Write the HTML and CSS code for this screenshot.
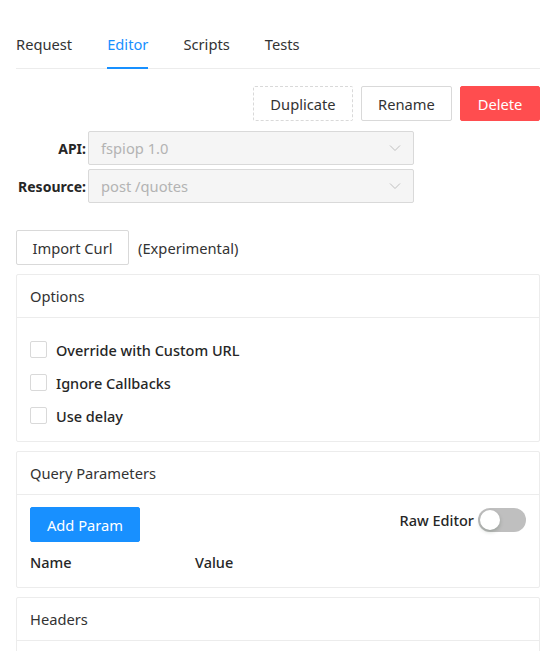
FILE: index.html
```html
<!DOCTYPE html>
<html>
<head>
<meta charset="utf-8">
<link rel="stylesheet" href="styles.css">
</head>
<body>
<div class="page">
  <nav class="tabs">
    <div class="tab">Request</div>
    <div class="tab active">Editor</div>
    <div class="tab">Scripts</div>
    <div class="tab">Tests</div>
  </nav>

  <div class="actions">
    <button class="btn dashed">Duplicate</button>
    <button class="btn">Rename</button>
    <button class="btn danger">Delete</button>
  </div>

  <div class="form">
    <label class="lbl">API:</label>
    <div class="select"><span>fspiop 1.0</span><svg class="arrow" viewBox="0 0 12 8"><path d="M1 1.5 L6 6.5 L11 1.5" fill="none" stroke="#bfbfbf" stroke-width="1"/></svg></div>
    <label class="lbl">Resource:</label>
    <div class="select"><span>post /quotes</span><svg class="arrow" viewBox="0 0 12 8"><path d="M1 1.5 L6 6.5 L11 1.5" fill="none" stroke="#bfbfbf" stroke-width="1"/></svg></div>
  </div>

  <div class="curl">
    <button class="btn">Import Curl</button>
    <span>(Experimental)</span>
  </div>

  <section class="card">
    <div class="card-head">Options</div>
    <div class="card-body options">
      <label class="check"><span class="box"></span>Override with Custom URL</label>
      <label class="check"><span class="box"></span>Ignore Callbacks</label>
      <label class="check"><span class="box"></span>Use delay</label>
    </div>
  </section>

  <section class="card">
    <div class="card-head">Query Parameters</div>
    <div class="card-body params">
      <div class="params-top">
        <button class="btn primary">Add Param</button>
        <div class="raw">Raw Editor <span class="switch"><span class="knob"></span></span></div>
      </div>
      <div class="cols">
        <div class="col-name">Name</div>
        <div class="col-value">Value</div>
      </div>
    </div>
  </section>

  <section class="card">
    <div class="card-head">Headers</div>
    <div class="card-body"></div>
  </section>
</div>
</body>
</html>
```

FILE: styles.css
```css
* { box-sizing: border-box; }
html, body { margin: 0; padding: 0; background: #fff; }
body {
  font-family: "Noto Sans", "Open Sans", sans-serif;
  font-size: 14px;
  color: #333;
}
.page {
  padding: 21px 9px 0 16px;
}
.tabs {
  display: flex;
  gap: 35px;
  border-bottom: 1px solid #ececec;
  height: 48px;
}
.tab {
  padding: 12px 0 0;
  line-height: 22px;
  font-size: 14.7px;
  color: #333;
  height: 48px;
  white-space: nowrap;
}
.tab.active {
  color: #1890ff;
  border-bottom: 2px solid #1890ff;
  margin-bottom: -1px;
  height: 48px;
}
.actions {
  display: flex;
  justify-content: flex-end;
  gap: 8px;
  margin-top: 17px;
}
.btn {
  font-family: inherit;
  font-size: 14.7px;
  color: #333;
  background: #fff;
  border: 1px solid #d9d9d9;
  border-radius: 2px;
  height: 35px;
  padding: 0 10px;
  cursor: pointer;
  white-space: nowrap;
}
.btn.dashed { border-style: dashed; width: 100px; }
.actions .btn:nth-child(2) { width: 91px; }
.btn.danger { background: #ff4d4f; border-color: #ff4d4f; color: #fff; width: 80px; }
.btn.primary { background: #1890ff; border-color: #1890ff; color: #fff; }

.form {
  display: grid;
  grid-template-columns: 70px 326px;
  column-gap: 2px;
  row-gap: 4px;
  margin-top: 10px;
  align-items: center;
}
.lbl {
  text-align: right;
  font-weight: 700;
  font-size: 14px;
  color: #262626;
  white-space: nowrap;
}
.select {
  height: 34px;
  background: #f5f5f5;
  border: 1px solid #d9d9d9;
  border-radius: 2px;
  display: flex;
  align-items: center;
  justify-content: space-between;
  padding: 0 12px;
  color: #b3b3b3;
  font-size: 14.7px;
}
.arrow { width: 12px; height: 8px; }

.curl {
  display: flex;
  align-items: center;
  gap: 9px;
  margin-top: 27px;
  font-size: 14.7px;
}
.curl .btn { width: 113px; }

.card {
  border: 1px solid #ececec;
  border-radius: 2px;
  margin-top: 9px;
}
.card-head {
  height: 43px;
  border-bottom: 1px solid #ececec;
  padding: 0 13px;
  display: flex;
  align-items: center;
  font-size: 14.7px;
  color: #333;
}
.options {
  padding: 15px 13px 9px;
  display: flex;
  flex-direction: column;
}
.check {
  display: flex;
  align-items: center;
  gap: 9px;
  height: 33px;
  font-weight: 500;
  font-size: 14.5px;
  color: #262626;
  white-space: nowrap;
}
.box {
  width: 17px;
  height: 17px;
  border: 1px solid #d9d9d9;
  border-radius: 2px;
  background: #fff;
  flex: none;
}
.params {
  padding: 12px 13px 13px;
}
.params-top {
  display: flex;
  justify-content: space-between;
  align-items: flex-start;
}
.params-top .btn { width: 110px; height: 35px; }
.raw {
  display: flex;
  align-items: center;
  gap: 4px;
  font-weight: 500;
  font-size: 14.5px;
  color: #262626;
  margin-top: 1px;
  white-space: nowrap;
}
.switch {
  position: relative;
  width: 48px;
  height: 24px;
  border-radius: 12px;
  background: #bfbfbf;
  display: inline-block;
}
.knob {
  position: absolute;
  left: 2px;
  top: 2px;
  width: 20px;
  height: 20px;
  border-radius: 50%;
  background: #fff;
  box-shadow: 0 2px 4px rgba(0,35,11,0.2);
}
.cols {
  display: flex;
  margin-top: 8px;
  height: 24px;
  align-items: center;
  font-weight: 500;
  font-size: 14.5px;
  color: #262626;
}
.col-name { width: 165px; }
.card:last-child .card-body { height: 20px; }
```
